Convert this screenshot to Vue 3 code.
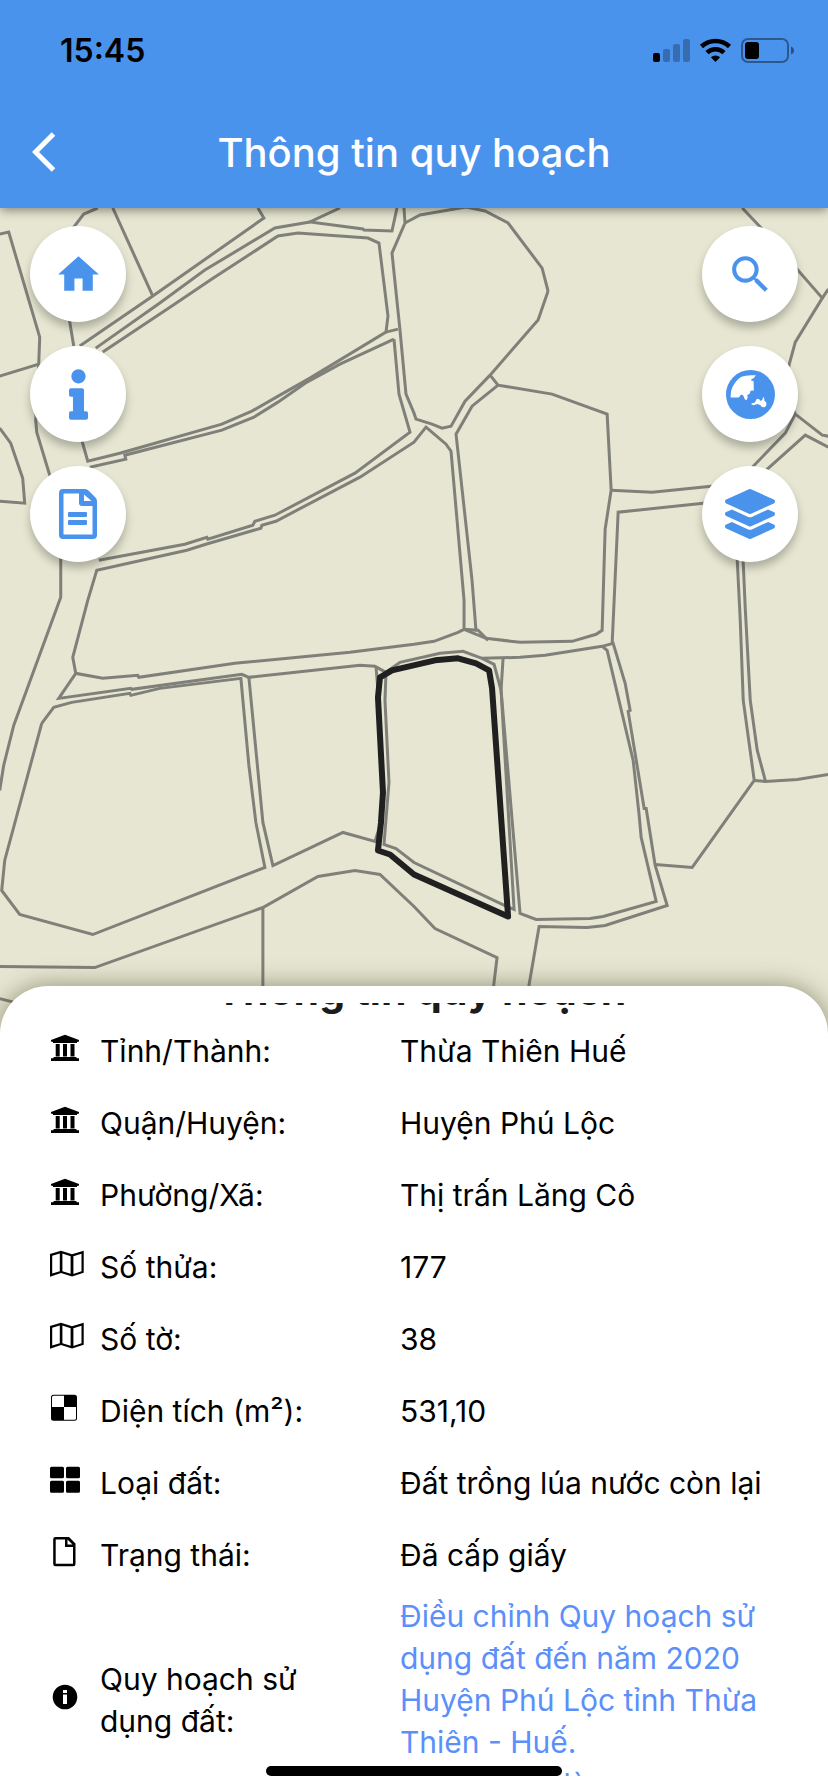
<template>
  <div class="screen">
    <header class="header">
      <div class="status-bar">
        <span class="time">15:45</span>
        <svg class="status-icons" viewBox="0 0 142 26" aria-hidden="true">
          <rect x="0" y="16" width="7" height="9" rx="2" />
          <g opacity="0.25">
            <rect x="10" y="12" width="7" height="13" rx="2" />
            <rect x="20" y="7" width="7" height="18" rx="2" />
            <rect x="30" y="2" width="7" height="23" rx="2" />
          </g>
          <g fill="none" stroke="#000" stroke-width="4.6">
            <path d="M48.5 9.5a20.5 20.5 0 0 1 28 0" />
            <path d="M54 15.6a12.5 12.5 0 0 1 17 0" />
          </g>
          <path d="M62.500 25l-4.600-4.800a6.800 6.800 0 0 1 9.200 0z" />
          <rect
            x="89"
            y="2"
            width="46"
            height="23"
            rx="6"
            fill="none"
            stroke="#000"
            stroke-opacity="0.4"
            stroke-width="2"
          />
          <rect x="92" y="5" width="14" height="17" rx="3" />
          <path d="M138 9.500q3 1.200 3 4t-3 4z" opacity="0.45" />
        </svg>
      </div>
      <div class="toolbar">
        <button type="button" class="back" aria-label="Quay lại">
          <svg viewBox="0 0 24 40">
            <path d="M21.500 2L3.500 20l18 18" />
          </svg>
        </button>
        <h1>Thông tin quy hoạch</h1>
      </div>
    </header>

    <main class="map">
      <svg
        class="parcels"
        viewBox="0 208 828 825"
        preserveAspectRatio="xMidYMin slice"
        aria-hidden="true"
      >
        <polyline v-for="line in parcels" :key="line" :points="line" />
        <polygon class="selected" :points="selectedParcel" />
      </svg>

      <nav class="controls left">
        <button type="button" aria-label="Trang chủ">
          <svg width="49" height="49" viewBox="0 0 24 24">
            <path d="M10 20v-6h4v6h5v-8h3L12 3 2 12h3v8z" />
          </svg>
        </button>
        <button type="button" aria-label="Thông tin">
          <svg width="19" height="51" viewBox="0 0 192 512">
            <path
              d="M20 424.229h20V279.771H20c-11.046 0-20-8.954-20-20V212c0-11.046 8.954-20 20-20h112c11.046 0 20 8.954 20 20v212.229h20c11.046 0 20 8.954 20 20V492c0 11.046-8.954 20-20 20H20c-11.046 0-20-8.954-20-20v-47.771c0-11.046 8.954-20 20-20zM96 0C56.235 0 24 32.235 24 72s32.235 72 72 72 72-32.235 72-72S135.764 0 96 0z"
            />
          </svg>
        </button>
        <button type="button" aria-label="Tài liệu">
          <svg width="38" height="50" viewBox="0 0 38 50">
            <path
              fill-rule="evenodd"
              d="M4 0h22q2 0 3.500 1.500l7 7Q38 10 38 12v34q0 4-4 4H4q-4 0-4-4V4q0-4 4-4zm1 4.500q-.5 0-.5.5v40q0 .5.5.5h28q.5 0 .5-.5V17H23q-3 0-3-3V4.500zm20 1V12h7.500z"
            />
            <rect x="9" y="23" width="19" height="5" rx="1" />
            <rect x="9" y="31" width="19" height="5" rx="1" />
          </svg>
        </button>
      </nav>

      <nav class="controls right">
        <button type="button" aria-label="Tìm kiếm">
          <svg width="49" height="49" viewBox="0 0 24 24">
            <path
              d="M15.500 14h-.79l-.28-.27C15.410 12.590 16 11.110 16 9.500 16 5.910 13.090 3 9.500 3S3 5.910 3 9.500 5.910 16 9.500 16c1.610 0 3.090-.59 4.230-1.570l.27.28v.79l5 4.990L20.490 19l-4.990-5zm-6 0C7.010 14 5 11.990 5 9.500S7.010 5 9.500 5 14 7.010 14 9.500 11.990 14 9.500 14z"
            />
          </svg>
        </button>
        <button type="button" aria-label="Bản đồ nền">
          <svg width="49" height="49" viewBox="0 0 146 146">
            <circle cx="73" cy="73" r="73" />
            <path
              fill="#fff"
              d="M14 82Q13 62 20 49 30 30 46 20q14-6 43-4l-6 8-8 4 1 5 6-1 1 29-10 1-2 8-8 5 2 6-4 9-5-3-5-12-6-2-7 9zM76 100l10-3 6-11 7 1 4 5 6-4 1-6 3-1 2 11 5 5 0 8-4 6-9-1-5-6-9-3-11 4-6-2z"
            />
          </svg>
        </button>
        <button type="button" aria-label="Lớp bản đồ">
          <svg width="50" height="50" viewBox="0 0 512 512">
            <path
              d="M12.410 148.020l232.940 105.670c6.800 3.090 14.490 3.090 21.290 0l232.940-105.670c16.550-7.510 16.550-32.520 0-40.030L266.650 2.310a25.607 25.607 0 0 0-21.290 0L12.410 107.980c-16.550 7.510-16.550 32.530 0 40.040zm487.180 88.280l-58.090-26.330-161.640 73.270c-7.560 3.430-15.590 5.170-23.860 5.170s-16.290-1.740-23.860-5.170L70.510 209.970l-58.100 26.330c-16.550 7.500-16.550 32.500 0 40l232.940 105.590c6.800 3.080 14.490 3.080 21.290 0L499.590 276.300c16.550-7.500 16.550-32.500 0-40zm0 127.800l-57.870-26.230-161.860 73.370c-7.560 3.430-15.590 5.170-23.860 5.170s-16.290-1.740-23.860-5.170L70.290 337.870 12.410 364.100c-16.550 7.500-16.550 32.500 0 40l232.940 105.590c6.800 3.080 14.490 3.080 21.290 0L499.590 404.100c16.550-7.500 16.550-32.500 0-40z"
            />
          </svg>
        </button>
      </nav>
    </main>

    <section class="sheet">
      <div class="sheet-scroll">
        <h2>Thông tin quy hoạch</h2>
        <dl>
          <div v-for="row in rows" :key="row.label" class="row">
            <dt>
              <svg class="row-icon" viewBox="0 0 36 30" aria-hidden="true">
                <path :d="icons[row.icon]" fill-rule="evenodd" />
              </svg>
              <span class="label">{{ row.label }}</span>
            </dt>
            <dd>
              <a v-if="row.link" href="#">
                {{ row.value }}<br />{{ row.extra }}
              </a>
              <template v-else>{{ row.value }}</template>
            </dd>
          </div>
        </dl>
      </div>
    </section>

    <div class="home-indicator" />
  </div>
</template>

<script setup>
const icons = {
  bank: 'M15 1.700L29 7v1.500l-2 .5v1H3V9l-2-.5V7zM5.700 11h4v12.500h-4zM13 11h4v12.500h-4zM20.500 11h4v12.500h-4zM4 24h22l1 1.300h2V28H1v-2.700h2z',
  map: 'M0 5L11 1.700l11 3.500L33.700 1.700v22L22 27.500 11 24 0 27.700zM2.200 6.800v17.800l7.600-2.400V4.500zM12.400 4.500v17.700l8.200 2.600V7.200zM23.400 7.200v17.700l8.100-2.700V4.700z',
  checker:
    'M3.500 1.700h21q2.500 0 2.500 2.500v21q0 2.500-2.500 2.500h-21Q1 27.700 1 25.200v-21q0-2.500 2.500-2.500zM3.500 2.700Q2 2.700 2 4.200V14h12V2.700zM14 14v12.700h10.500q1.500 0 1.500-1.500V14z',
  grid: 'M1.500 1.700h11q1.500 0 1.500 1.500v8.600q0 1.500-1.500 1.500h-11Q0 13.300 0 11.800V3.200q0-1.500 1.500-1.500zM17.500 1.700h11q1.500 0 1.500 1.500v8.600q0 1.500-1.500 1.500h-11q-1.500 0-1.500-1.500V3.200q0-1.500 1.500-1.500zM1.500 15.700h11q1.500 0 1.500 1.500v9q0 1.500-1.500 1.500h-11Q0 27.700 0 26.200v-9q0-1.500 1.500-1.500zM17.500 15.700h11q1.500 0 1.500 1.500v9q0 1.500-1.500 1.500h-11q-1.500 0-1.500-1.500v-9q0-1.500 1.500-1.500z',
  file: 'M5.500 0h13.500l6.500 6.500V27q0 2.300-2.300 2.300H5.500Q3.200 29.300 3.200 27V2.300Q3.200 0 5.500 0zM5.700 2.500v24.300H23V10H15V2.500zM17.500 2.600v5h5z',
  info: 'M15 2.700a12.300 12.300 0 1 1 0 24.600 12.300 12.300 0 1 1 0-24.600zM13 8v3h4V8zM13 12.500v9.500h4v-9.500z',
}

const rows = [
  { icon: 'bank', label: 'Tỉnh/Thành:', value: 'Thừa Thiên Huế' },
  { icon: 'bank', label: 'Quận/Huyện:', value: 'Huyện Phú Lộc' },
  { icon: 'bank', label: 'Phường/Xã:', value: 'Thị trấn Lăng Cô' },
  { icon: 'map', label: 'Số thửa:', value: '177' },
  { icon: 'map', label: 'Số tờ:', value: '38' },
  { icon: 'checker', label: 'Diện tích (m²):', value: '531,10' },
  { icon: 'grid', label: 'Loại đất:', value: 'Đất trồng lúa nước còn lại' },
  { icon: 'file', label: 'Trạng thái:', value: 'Đã cấp giấy' },
  {
    icon: 'info',
    label: 'Quy hoạch sử dụng đất:',
    value: 'Điều chỉnh Quy hoạch sử dụng đất đến năm 2020 Huyện Phú Lộc tỉnh Thừa Thiên - Huế.',
    extra: 'Loại đất số là',
    link: true,
  },
]

const selectedParcel =
  '380,677 392,670 435,660 458,658 476,663 489,670 492,688 508,916 414,874 390,854 378,850 381,822 383,792 378,697'

const parcels = [
  // top left
  '98,208 84,214 74,227 66,270 70,322 74,346',
  '113,208 153,296',
  '258,208 264,218 153,296 80,346',
  '340,208 310,222 363,229 364,230 392,231 397,208',
  '310,222 275,228 205,270 160,303 96,348',
  '103,352 175,304 212,279 278,236 298,233 368,238 379,243 388,316 386,332 310,378 280,395 252,411 222,424 120,453 88,461 82,440',
  '386,332 398,329',
  '394,339 340,364 307,382 278,402 254,417 222,430 125,455 126,459 90,467',
  '394,339 399,394 410,432 355,473 275,515 255,521 253,525 208,539 207,537 185,544 99,560',
  '0,234 9,232 40,337 39,364 0,376',
  '39,364 36,420 37,432 50,475 61,520 61,597 14,725 4,765 0,790',
  '0,428 11,443 23,478 25,503 0,501',
  // centre
  '464,629 464,600 451,451 446,444 426,427 414,442 360,477 276,521 262,525 261,528 206,544 187,550 97,570 88,600 73,657 76,673 103,678 138,675 139,677 235,663 350,652 414,644 434,641 458,632 464,629 478,630 488,640',
  '404,208 405,223 392,253 400,330 406,394 414,413 416,419 432,424 442,428 451,426 465,401 490,375 538,320 548,291',
  '548,291 542,268 508,223 485,211 466,207 420,215 405,223',
  '490,375 498,385 552,394 607,414 611,490 605,529 602,630 596,634 572,641 520,642 486,638 464,629',
  '476,631 472,580 456,434 472,406 498,385',
  '611,490 652,492 711,486 730,484',
  '730,500 703,503 618,512 614,600 612,643',
  // lower left
  '76,673 59,698 131,688 132,689 242,674 249,677 360,665 375,666 386,672',
  '42,723 54,707 72,702 130,693 131,695 160,688 241,678 249,765 256,822 265,867 93,934 20,914 2,890 5,860 42,723',
  '249,677 263,822 273,865 343,832 375,841 381,822',
  '376,666 378,690',
  '386,672 385,700 389,782 384,844 396,848 414,862 507,906 514,909 501,690 494,664 482,658 463,651 440,653 400,662 386,672',
  '0,966 95,967 263,907 318,876 355,870 380,874 414,906 435,928 497,957 493,990',
  '263,907 263,990',
  '0,998 20,1003',
  // lower right
  '503,658 501,690 520,913 536,919 590,918 603,916 656,901 641,837 639,815 633,760 607,650 602,646',
  '482,658 520,657 545,655 602,646 613,643 625,683 630,710 628,711 644,808 646,808 655,865 667,905 605,925 587,927 539,926 528,990',
  '655,864 692,867 754,780 743,700 740,620 736,540',
  '742,540 745,608 750,700 757,750 765,780',
  '754,780 765,781 797,779 828,774',
  // right edge
  '742,208 760,227 822,298 795,342 789,364 784,390 795,414 822,435 828,436',
  '822,298 828,289',
  '795,414 785,433 753,466 740,480',
  '755,480 767,469 805,435 828,447',
]
</script>

<style>
body {
  margin: 0;
}
</style>

<style scoped>
.screen {
  position: relative;
  display: flex;
  flex-direction: column;
  height: 100vh;
  overflow: hidden;
  background: #fff;
  color: #000;
  font-family: Inter, "Noto Sans", sans-serif;
}

button {
  padding: 0;
  border: 0;
  cursor: pointer;
}

.header {
  position: relative;
  z-index: 1;
  flex: none;
  background: #4a93ed;
  box-shadow: 0 2px 10px rgba(0, 0, 0, 0.45);
}
.status-bar {
  display: flex;
  align-items: center;
  justify-content: space-between;
  height: 96px;
  padding: 4px 33px 0 60px;
  box-sizing: border-box;
}
.time {
  font-size: 32px;
  font-weight: 600;
}
.status-icons {
  width: 142px;
  height: 26px;
}
.toolbar {
  display: grid;
  grid-template-columns: 88px 1fr 88px;
  align-items: center;
  height: 112px;
}
.back {
  display: flex;
  align-items: center;
  height: 88px;
  padding-left: 32px;
  background: none;
}
.back svg {
  width: 24px;
  height: 40px;
  fill: none;
  stroke: #fff;
  stroke-width: 5;
}
h1 {
  margin: 0;
  color: #fff;
  font-size: 40px;
  font-weight: 500;
  text-align: center;
}

.map {
  position: relative;
  flex: 1;
  min-height: 0;
  background: #e6e6d2;
}
.parcels {
  display: block;
  width: 100%;
  height: 100%;
  fill: none;
  stroke: #80807a;
  stroke-width: 3;
}
.selected {
  stroke: #202020;
  stroke-width: 6;
  stroke-linejoin: round;
}
.controls {
  position: absolute;
  top: 18px;
  display: flex;
  flex-direction: column;
  gap: 24px;
}
.left {
  left: 30px;
}
.right {
  right: 30px;
}
.controls button {
  display: flex;
  align-items: center;
  justify-content: center;
  width: 96px;
  height: 96px;
  border-radius: 50%;
  background: #fff;
  box-shadow: 0 6px 8px rgba(0, 0, 0, 0.25);
}
.controls svg {
  fill: #4a93ed;
}

.sheet {
  position: relative;
  display: flex;
  flex: 0 0 45vh;
  flex-direction: column;
  min-height: 0;
  box-sizing: border-box;
  margin-top: -48px;
  padding: 17px 50px 16px;
  border-radius: 48px 48px 0 0;
  background: #fff;
  box-shadow: 0 0 24px rgba(60, 60, 30, 0.5);
}
.sheet-scroll {
  flex: 1 1 0;
  min-height: 0;
  overflow: hidden;
}
/* heading is scrolled mostly out of view */
h2 {
  display: flex;
  align-items: flex-end;
  justify-content: center;
  height: 12px;
  margin: 0;
  padding-left: 14px;
  overflow: hidden;
  color: #1d1b1b;
  font-size: 41px;
  font-weight: 700;
  line-height: 50px;
  white-space: nowrap;
}
dl {
  margin: 0;
  font-size: 30px;
  line-height: 42px;
}
.row {
  display: flex;
  align-items: center;
  min-height: 72px;
  padding: 4px 0;
  box-sizing: border-box;
}
dt {
  display: flex;
  flex: 0 0 350px;
  align-items: center;
}
.row-icon {
  flex: none;
  width: 36px;
  height: 30px;
  margin-right: 14px;
  padding-bottom: 6px;
}
.label {
  width: 250px;
}
dd {
  flex: 1;
  margin: 0;
}
a {
  color: #5b8ff9;
  text-decoration: none;
}

.home-indicator {
  position: absolute;
  bottom: 16px;
  left: 50%;
  width: 296px;
  height: 10px;
  border-radius: 5px;
  background: #000;
  transform: translateX(-50%);
}
</style>
